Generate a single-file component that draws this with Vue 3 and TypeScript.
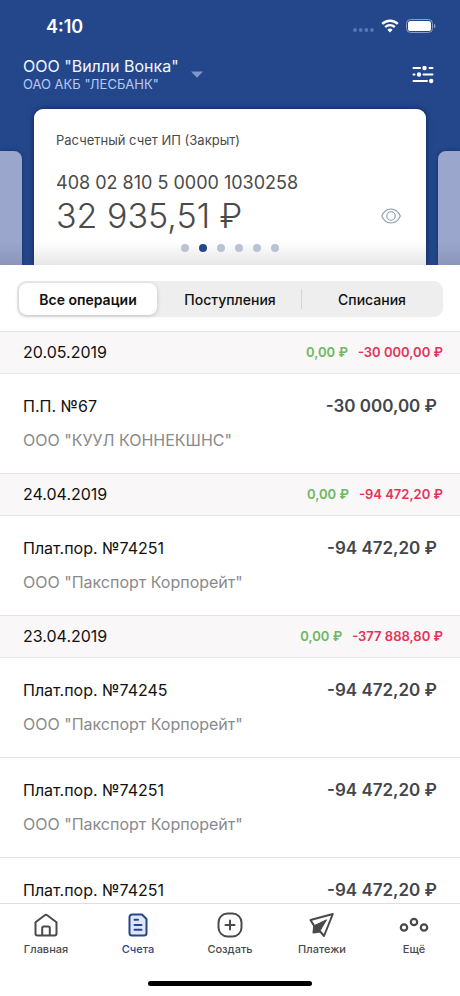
<script setup lang="ts">
import { ref } from 'vue'

interface Operation {
  title: string
  amount: string
  company?: string
}

interface DayGroup {
  date: string
  income: string
  outcome: string
  operations: Operation[]
}

const filters: string[] = ['Все операции', 'Поступления', 'Списания']
const activeFilter = ref(0)

const pages = 6
const activePage = ref(1)

const groups: DayGroup[] = [
  {
    date: '20.05.2019',
    income: '0,00 ₽',
    outcome: '-30 000,00 ₽',
    operations: [{ title: 'П.П. №67', amount: '-30 000,00 ₽', company: 'ООО "КУУЛ КОННЕКШНС"' }],
  },
  {
    date: '24.04.2019',
    income: '0,00 ₽',
    outcome: '-94 472,20 ₽',
    operations: [{ title: 'Плат.пор. №74251', amount: '-94 472,20 ₽', company: 'ООО "Пакспорт Корпорейт"' }],
  },
  {
    date: '23.04.2019',
    income: '0,00 ₽',
    outcome: '-377 888,80 ₽',
    operations: [
      { title: 'Плат.пор. №74245', amount: '-94 472,20 ₽', company: 'ООО "Пакспорт Корпорейт"' },
      { title: 'Плат.пор. №74251', amount: '-94 472,20 ₽', company: 'ООО "Пакспорт Корпорейт"' },
      { title: 'Плат.пор. №74251', amount: '-94 472,20 ₽' },
    ],
  },
]
</script>

<template>
  <div class="app">
    <header class="top">
      <div class="status">
        <span class="time">4:10</span>
        <span class="indicators">
          <svg width="21" height="4" viewBox="0 0 21 4" fill="#5a75b2">
            <circle cx="2" cy="2" r="1.900" /><circle cx="7.700" cy="2" r="1.900" />
            <circle cx="13.400" cy="2" r="1.900" /><circle cx="19" cy="2" r="1.900" />
          </svg>
          <svg class="wifi" width="18" height="14" viewBox="0 0 18 14" fill="none" stroke="#fff">
            <path d="M1.2 4.9a11.2 11.2 0 0 1 15.6 0" stroke-width="2.5" />
            <path d="M4.2 8.1a6.9 6.9 0 0 1 9.6 0" stroke-width="2.4" />
            <path d="M9 13.4 6.4 10.7a3.8 3.8 0 0 1 5.2 0Z" fill="#fff" stroke="none" />
          </svg>
          <svg width="30" height="14" viewBox="0 0 30 14">
            <rect x=".5" y=".5" width="26" height="13" rx="4" fill="none" stroke="#8b9dca" />
            <rect x="2" y="2" width="23" height="10" rx="2.6" fill="#fff" />
            <path d="M28 4.7c2 .9 2 3.7 0 4.6Z" fill="#8b9dca" />
          </svg>
        </span>
      </div>

      <div class="company-bar">
        <button class="company" type="button">
          <span class="company-text">
            <span class="company-name">ООО "Вилли Вонка"</span>
            <span class="bank-name">ОАО АКБ "ЛЕСБАНК"</span>
          </span>
          <svg width="12" height="7" viewBox="0 0 12 7"><path d="M0 .5h12L6 6.8Z" fill="#8197c9" /></svg>
        </button>
        <button class="icon-button" type="button" aria-label="Фильтр">
          <svg width="22" height="18" viewBox="0 0 22 18" fill="#fff" stroke="#fff" stroke-width="2" stroke-linecap="round">
            <path d="M1.5 2H8M17.5 2h3M1.5 8.500h1M11.5 8.500h9M1.5 15H15" fill="none" />
            <circle cx="12.5" cy="2" r="1.2" /><circle cx="7" cy="8.500" r="1.2" /><circle cx="19.2" cy="15" r="1.2" />
          </svg>
        </button>
      </div>

      <div class="carousel">
        <div class="side side-left"></div>
        <section class="card">
          <div class="account-label">Расчетный счет ИП (Закрыт)</div>
          <div class="account-number">408 02 810 5 0000 1030258</div>
          <div class="balance-row">
            <span class="balance">32 935,51 ₽</span>
            <button class="icon-button" type="button" aria-label="Скрыть баланс">
              <svg width="20" height="16" viewBox="0 0 20 16" fill="none" stroke="#8b9ba8">
                <path d="M.7 8C2.8 3.4 5.8 1 10 1s7.200 2.400 9.300 7c-2.100 4.600-5.100 7-9.300 7S2.800 12.600.7 8Z" stroke-width="1.100" />
                <circle cx="10" cy="8" r="4.200" stroke-width="1.100" />
              </svg>
            </button>
          </div>
          <div class="dots">
            <button
              v-for="n in pages"
              :key="n"
              type="button"
              class="dot"
              :class="{ active: activePage === n - 1 }"
              :aria-label="`Счет ${n}`"
              @click="activePage = n - 1"
            ></button>
          </div>
        </section>
        <div class="side side-right"></div>
      </div>
    </header>

    <div class="segments">
      <button
        v-for="(name, i) in filters"
        :key="name"
        type="button"
        class="segment"
        :class="{ selected: activeFilter === i }"
        @click="activeFilter = i"
      >{{ name }}</button>
    </div>

    <main class="list">
      <section v-for="group in groups" :key="group.date">
        <div class="day">
          <span class="date">{{ group.date }}</span>
          <span class="income">{{ group.income }}</span>
          <span class="outcome">{{ group.outcome }}</span>
        </div>
        <article v-for="(op, i) in group.operations" :key="i" class="operation">
          <div class="op-main">
            <span>{{ op.title }}</span>
            <span class="amount">{{ op.amount }}</span>
          </div>
          <div v-if="op.company" class="op-company">{{ op.company }}</div>
        </article>
      </section>
    </main>

    <nav class="tabs">
      <a class="tab" href="#home">
        <svg width="28" height="28" viewBox="0 0 28 28" fill="none" stroke="#4a4a4a" stroke-width="2" stroke-linejoin="round">
          <path d="M3.500 11.200 12.800 4.200a2 2 0 0 1 2.400 0l9.300 7V22.500a2 2 0 0 1-2 2h-17a2 2 0 0 1-2-2Z" />
          <path d="M10.200 24.500V17a1.500 1.500 0 0 1 1.500-1.500h4.600a1.500 1.500 0 0 1 1.500 1.500v7.500" />
        </svg>
        <span>Главная</span>
      </a>
      <a class="tab current" href="#accounts">
        <svg width="28" height="28" viewBox="0 0 28 28" fill="#dfe6f6" stroke="#24478c" stroke-width="2" stroke-linecap="round" stroke-linejoin="round">
          <path d="M8 3.500h10l4.500 4.500V22a2.500 2.500 0 0 1-2.500 2.500H8A2.500 2.500 0 0 1 5.500 22V6A2.500 2.500 0 0 1 8 3.500Z" />
          <path d="M10.500 8.700h3.500M10.500 14h7M10.500 18.800h7" />
        </svg>
        <span>Счета</span>
      </a>
      <a class="tab" href="#create">
        <svg width="28" height="28" viewBox="0 0 28 28" fill="none" stroke="#4a4a4a" stroke-width="2" stroke-linecap="round">
          <rect x="2.500" y="2.500" width="23" height="23" rx="9" />
          <path d="M14 9.500v9M9.500 14h9" />
        </svg>
        <span>Создать</span>
      </a>
      <a class="tab" href="#payments">
        <svg width="28" height="28" viewBox="0 0 28 28" stroke="#4a4a4a" stroke-width="2" stroke-linejoin="round">
          <path d="M2.500 9 24.800 3 16 25l-3.800-4.500L5.500 21.500l.7-6.500Z" fill="none" />
          <path d="M3.500 10.500 6.500 14.500 18.500 8.800 11.800 20.300 5.500 21.500 6 14.800Z" fill="#4a4a4a" stroke-width="1" />
        </svg>
        <span>Платежи</span>
      </a>
      <a class="tab" href="#more">
        <svg width="30" height="28" viewBox="0 0 30 28" fill="none" stroke="#4a4a4a" stroke-width="2.200">
          <circle cx="5" cy="16.500" r="3.200" /><circle cx="15" cy="11" r="3.200" /><circle cx="25" cy="16.500" r="3.200" />
        </svg>
        <span>Ещё</span>
      </a>
    </nav>
    <div class="home-indicator"></div>
  </div>
</template>

<style>
body {
  margin: 0;
  background: #fff;
}
</style>

<style scoped>
.app {
  display: flex;
  flex-direction: column;
  height: 100vh;
  overflow: hidden;
  background: #fff;
  color: #111;
  font-family: Inter, "Liberation Sans", sans-serif;
}

button {
  padding: 0;
  border: 0;
  background: none;
  color: inherit;
  font: inherit;
  cursor: pointer;
}

svg {
  display: block;
  flex: none;
}

.top {
  flex: none;
  background: #24478c;
}

.status {
  display: flex;
  align-items: center;
  justify-content: space-between;
  padding: 14px 24px 0 46px;
  height: 24px;
  color: #fff;
}

.time {
  font-size: 18px;
  font-weight: 600;
}

.indicators {
  display: flex;
  align-items: center;
  gap: 7px;
}

.indicators svg:first-child {
  margin-top: 8px;
}

.company-bar {
  display: flex;
  align-items: center;
  justify-content: space-between;
  padding: 18px 26px 16px 23px;
}

.company {
  display: flex;
  align-items: center;
  gap: 12px;
  text-align: left;
}

.company-text {
  display: flex;
  flex-direction: column;
}

.company-name {
  color: #f4f7ff;
  font-size: 16px;
  line-height: 20px;
}

.bank-name {
  color: #b9caf3;
  font-size: 13px;
  line-height: 17px;
}

.carousel {
  display: grid;
  grid-template-columns: 22px 1fr 22px;
  gap: 12px;
  overflow: hidden;
  margin-top: -8px;
  padding-top: 8px;
}

.side {
  margin-top: 42px;
  background: linear-gradient(to top, #8b96b9, #9aa6cb 24px);
  box-shadow: 0 0 5px rgba(0, 10, 50, 0.4);
}

.side-left {
  border-radius: 0 8px 0 0;
}

.side-right {
  border-radius: 8px 0 0 0;
}

.card {
  padding: 22px 22px 13px;
  border-radius: 9px 9px 0 0;
  background: linear-gradient(to top, #e6e6e7, #fff 23px);
  box-shadow: 0 0 6px rgba(0, 10, 50, 0.6);
  color: #4a4a4a;
}

.account-label {
  font-size: 13px;
  line-height: 18px;
}

.account-number {
  margin-top: 22px;
  font-size: 18px;
  line-height: 24px;
}

.balance-row {
  display: flex;
  align-items: center;
  justify-content: space-between;
  padding-right: 3px;
}

.balance {
  font-size: 34px;
  font-weight: 300;
  line-height: 42px;
}

.dots {
  display: flex;
  justify-content: center;
  gap: 10px;
  margin-top: 7px;
}

.dot {
  width: 8px;
  height: 8px;
  border-radius: 50%;
  background: #bcc1d6;
}

.dot.active {
  background: #24478c;
}

.segments {
  display: grid;
  grid-template-columns: repeat(3, 1fr);
  flex: none;
  margin: 16px 17px 14px;
  border-radius: 9px;
  background: #eeeeef;
}

.segment {
  position: relative;
  height: 36px;
  color: #111;
  font-size: 14px;
  font-weight: 500;
}

.segment + .segment:not(.selected)::before {
  content: "";
  position: absolute;
  top: 8px;
  bottom: 8px;
  left: 0;
  width: 1px;
  background: #d4d4d6;
}

.segment.selected + .segment::before {
  display: none;
}

.segment.selected {
  height: 32px;
  margin: 2px;
  border-radius: 8px;
  background: #fff;
  box-shadow: 0 1px 4px rgba(0, 0, 0, 0.2);
  font-weight: 600;
}

.list {
  flex: 1;
  min-height: 0;
  overflow-y: auto;
  scrollbar-width: none;
}

.day {
  display: flex;
  align-items: center;
  gap: 10px;
  padding: 0 17px 0 23px;
  border-top: 1px solid #e6e5e6;
  border-bottom: 1px solid #e6e5e6;
  background: #f9f7f8;
  line-height: 41px;
}

.date {
  flex: 1;
  font-size: 16px;
}

.income,
.outcome {
  font-size: 13px;
  font-weight: 600;
}

.income {
  color: #6db85f;
}

.outcome {
  color: #e6325a;
}

.operation {
  padding: 20px 23px 21px;
}

.operation + .operation {
  border-top: 1px solid #e6e5e6;
}

.op-main {
  display: flex;
  justify-content: space-between;
  font-size: 16px;
  line-height: 24px;
}

.amount {
  color: #43464a;
  font-size: 17px;
  font-weight: 600;
}

.op-company {
  margin-top: 10px;
  color: #8a8a8c;
  font-size: 16px;
  line-height: 24px;
}

.tabs {
  display: grid;
  grid-template-columns: repeat(5, 1fr);
  flex: none;
  padding: 7px 0 24px;
  border-top: 1px solid #dedede;
  background: #fff;
}

.tab {
  display: flex;
  flex-direction: column;
  align-items: center;
  gap: 2px;
  color: #4a4a4a;
  font-size: 11px;
  font-weight: 500;
  line-height: 16px;
  text-decoration: none;
}

.tab.current {
  color: #24478c;
}

.home-indicator {
  flex: none;
  align-self: center;
  width: 164px;
  height: 5px;
  margin-bottom: 10px;
  border-radius: 3px;
  background: #000;
}
</style>
